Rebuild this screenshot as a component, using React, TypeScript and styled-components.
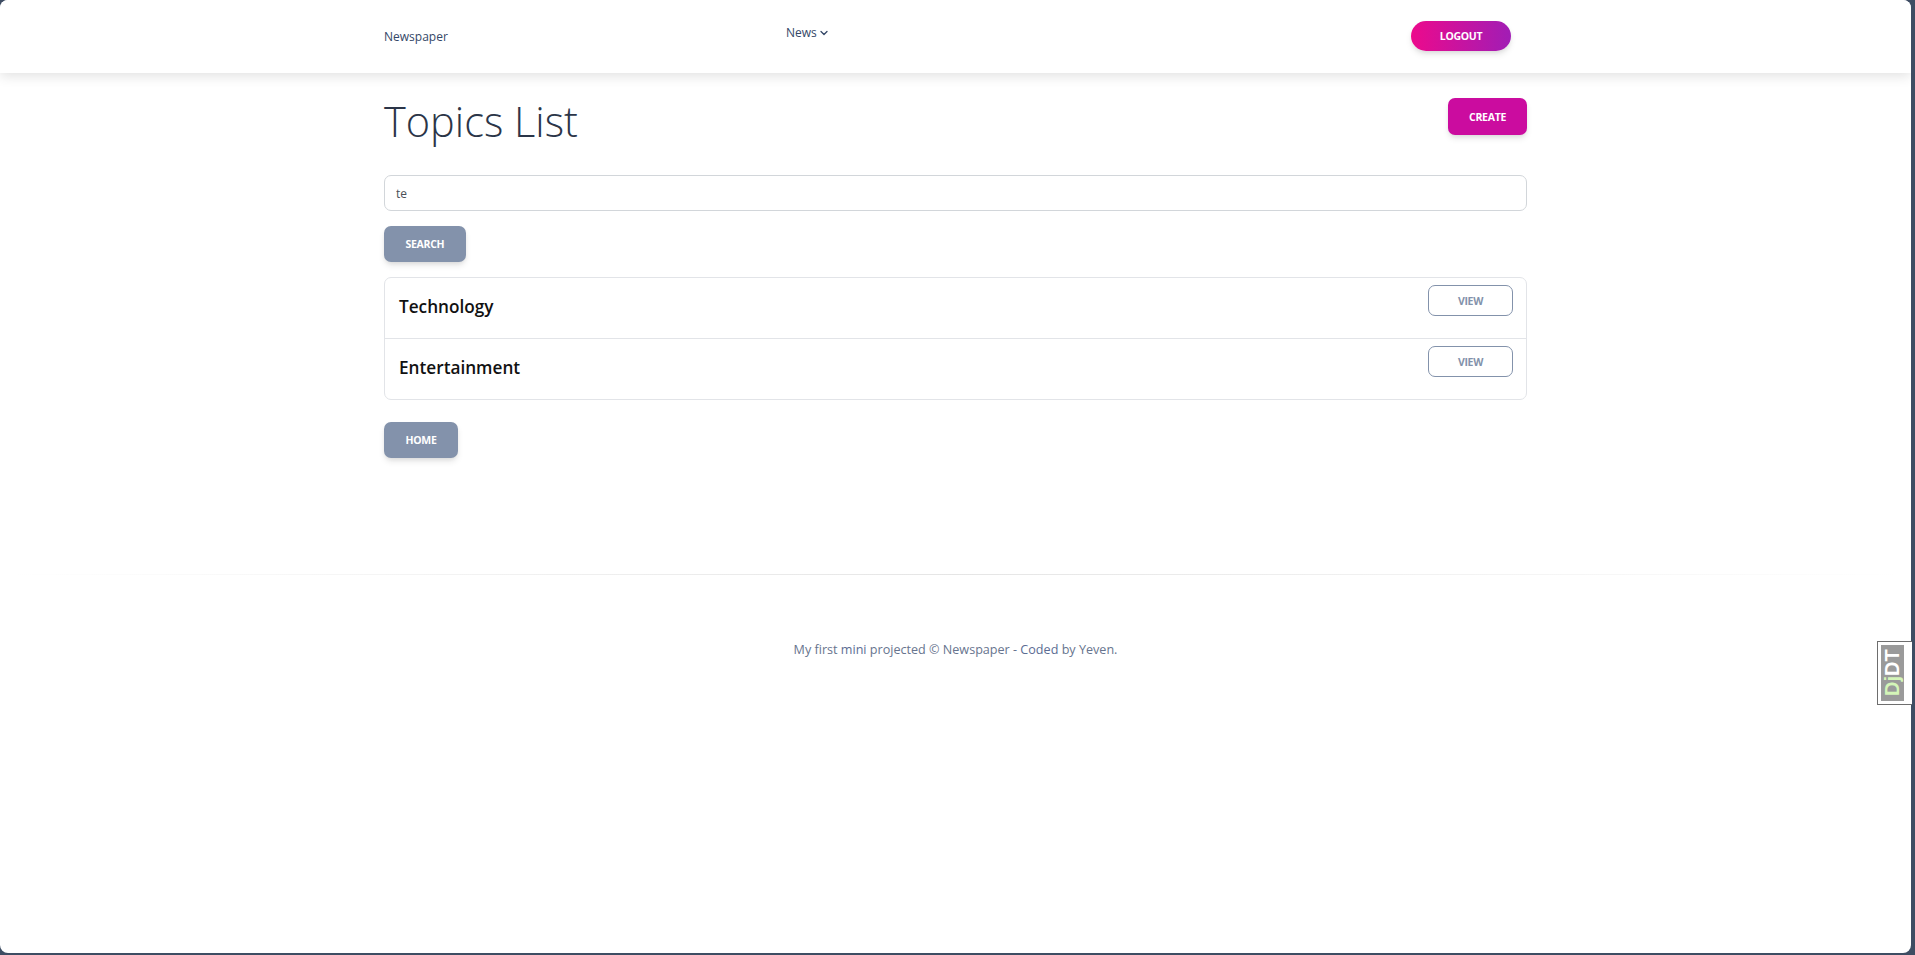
import React from "react";
import styled, { createGlobalStyle } from "styled-components";

const Global = createGlobalStyle`
  html, body { margin: 0; padding: 0; height: 100%; }
  body {
    background: #3e4d63;
    font-family: "Open Sans", "Liberation Sans", sans-serif;
    overflow: hidden;
  }
  #root { height: 100%; }
  * { box-sizing: border-box; }
`;

const Frame = styled.div`
  width: calc(100% - 4px);
  height: calc(100% - 2px);
  background: #fff;
  border-radius: 8px;
  overflow: hidden;
  display: flex;
  flex-direction: column;
`;

const NavBar = styled.header`
  height: 73px;
  flex: 0 0 73px;
  background: #fff;
  box-shadow: 0 3px 12px rgba(0, 0, 0, 0.12);
  position: relative;
  z-index: 1;
`;

const Container = styled.div`
  width: 1143px;
  margin: 0 auto;
`;

const NavInner = styled(Container)`
  height: 100%;
  display: flex;
  align-items: center;
  padding-bottom: 2px;
`;

const Brand = styled.a`
  width: 402px;
  font-size: 12px;
  color: #344767;
  text-decoration: none;
  padding-top: 2px;
`;

const NavMenu = styled.nav`
  flex: 1;
  display: flex;
  align-items: center;
  margin-top: -6px;
`;

const NavLink = styled.a`
  display: inline-flex;
  align-items: center;
  gap: 3px;
  font-size: 12px;
  color: #344767;
  text-decoration: none;
`;

const Button = styled.button<{ $variant: "primary" | "secondary" | "outline" | "gradient" }>`
  font-family: "Open Sans", "Liberation Sans", sans-serif;
  font-size: 10.5px;
  font-weight: 700;
  letter-spacing: -0.3px;
  text-transform: uppercase;
  line-height: 14px;
  border-radius: 7px;
  cursor: pointer;
  color: #fff;
  border: none;
  box-shadow: 0 4px 7px -1px rgba(0, 0, 0, 0.11), 0 2px 4px -1px rgba(0, 0, 0, 0.07);
  ${(p) =>
    p.$variant === "primary" &&
    `background: #cb0c9f; height: 37px; padding: 0 21px; margin-top: 1px;`}
  ${(p) =>
    p.$variant === "secondary" &&
    `background: #8392ab; height: 36px; padding: 0 21.5px;`}
  ${(p) =>
    p.$variant === "outline" &&
    `background: #fff; color: #8392ab; border: 1px solid #8392ab; height: 31px; width: 85px; padding: 0; box-shadow: none;`}
  ${(p) =>
    p.$variant === "gradient" &&
    `background: linear-gradient(90deg, #ec0a8c 0%, #a11db5 100%); height: 30px; width: 100px; padding: 0; border-radius: 20px; margin-right: 16px;`}
`;

const Main = styled(Container)`
  display: flex;
  flex-direction: column;
  align-items: flex-start;
`;

const TitleRow = styled.div`
  width: 100%;
  margin-top: 24px;
  display: flex;
  justify-content: space-between;
  align-items: flex-start;
`;

const Title = styled.h1`
  margin: 0;
  font-size: 41.5px;
  font-weight: 300;
  line-height: 48px;
  color: #2b3548;
`;

const SearchInput = styled.input`
  margin-top: 30px;
  width: 100%;
  height: 36px;
  border: 1px solid #d2d6da;
  border-radius: 7px;
  padding: 0 11px;
  font-family: "Open Sans", "Liberation Sans", sans-serif;
  font-size: 12px;
  color: #495057;
  outline: none;
`;

const SearchWrap = styled.div`
  margin-top: 15px;
`;

const TopicCard = styled.ul`
  list-style: none;
  margin: 15px 0 0;
  padding: 0;
  width: 100%;
  border: 1px solid #e2e4e8;
  border-radius: 7px;
`;

const TopicRow = styled.li`
  height: 60px;
  display: flex;
  justify-content: space-between;
  align-items: flex-start;
  padding: 7px 13px 0 14px;
  & + & { border-top: 1px solid #e2e4e8; height: 61px; }
`;

const TopicName = styled.h5`
  margin: 10px 0 0;
  font-size: 17.2px;
  font-weight: 600;
  line-height: 24px;
  color: #111;
`;

const HomeWrap = styled.div`
  margin-top: 22px;
`;

const Divider = styled.hr`
  margin: 116px 0 0;
  border: none;
  height: 1px;
  width: 100%;
  background: linear-gradient(90deg, rgba(0,0,0,0) 0%, rgba(0,0,0,0.1) 50%, rgba(0,0,0,0) 100%);
`;

const Footer = styled.footer`
  margin-top: 65px;
  text-align: center;
  font-size: 12.6px;
  line-height: 19px;
  color: #67748e;
`;

const FooterLink = styled.a`
  color: #5b6c93;
  text-decoration: none;
`;

const DjHandle = styled.div`
  position: fixed;
  top: 641px;
  right: 3px;
  width: 35px;
  height: 64px;
  background: #fff;
  border: 1px solid #6e6e6e;
  border-right: none;
  padding: 3px 0 3px 3px;
`;

const DjInner = styled.div`
  height: 100%;
  background: #9a9a9a;
  display: flex;
  align-items: center;
  justify-content: center;
  writing-mode: vertical-rl;
  transform: rotate(180deg);
  font-family: "Liberation Sans", Arial, sans-serif;
  font-weight: 700;
  font-size: 20px;
  color: #fff;
`;

const DjGreen = styled.span`
  color: #d4f5b8;
`;

const Chevron = () => (
  <svg width="8" height="6" viewBox="0 0 8 6" fill="none">
    <path d="M1 1.5L4 4.5L7 1.5" stroke="#344767" strokeWidth="1.3" strokeLinecap="round" strokeLinejoin="round" />
  </svg>
);

const topics = ["Technology", "Entertainment"];

export default function App() {
  return (
    <>
      <Global />
      <Frame>
        <NavBar>
          <NavInner>
            <Brand href="#">Newspaper</Brand>
            <NavMenu>
              <NavLink href="#">
                News <Chevron />
              </NavLink>
            </NavMenu>
            <Button $variant="gradient">Logout</Button>
          </NavInner>
        </NavBar>
        <Main>
          <TitleRow>
            <Title>Topics List</Title>
            <Button $variant="primary">Create</Button>
          </TitleRow>
          <SearchInput defaultValue="te" />
          <SearchWrap>
            <Button $variant="secondary">Search</Button>
          </SearchWrap>
          <TopicCard>
            {topics.map((t) => (
              <TopicRow key={t}>
                <TopicName>{t}</TopicName>
                <Button $variant="outline">View</Button>
              </TopicRow>
            ))}
          </TopicCard>
          <HomeWrap>
            <Button $variant="secondary">Home</Button>
          </HomeWrap>
        </Main>
        <Divider />
        <Footer>
          My first <FooterLink href="#">mini</FooterLink> projected © Newspaper - <FooterLink href="#">Coded</FooterLink> by Yeven.
        </Footer>
      </Frame>
      <DjHandle>
        <DjInner>
          <span>
            <DjGreen>Dj</DjGreen>DT
          </span>
        </DjInner>
      </DjHandle>
    </>
  );
}
